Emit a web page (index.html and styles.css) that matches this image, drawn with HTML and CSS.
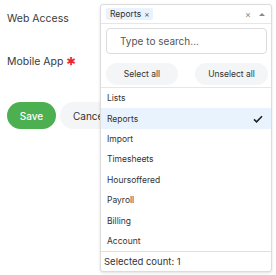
FILE: index.html
```html
<!DOCTYPE html>
<html>
<head>
<meta charset="utf-8">
<link rel="stylesheet" href="styles.css">
</head>
<body>
<div class="page">
  <div class="form">
    <div class="row row-web"><span class="label">Web Access</span></div>
    <div class="row row-mobile"><span class="label">Mobile App</span><span class="req">*</span></div>
    <div class="actions">
      <button class="btn btn-save">Save</button>
      <button class="btn btn-cancel">Cancel</button>
    </div>
  </div>
  <div class="select">
    <div class="control">
      <span class="tag">Reports <span class="tag-x">×</span></span>
      <span class="spacer"></span>
      <span class="clear">×</span>
      <span class="arrow"></span>
    </div>
    <div class="panel">
      <div class="search"><input type="text" placeholder="Type to search..."></div>
      <div class="bulk">
        <button class="pill pill-select">Select all</button>
        <button class="pill pill-unselect">Unselect all</button>
      </div>
      <ul class="options">
        <li>Lists</li>
        <li class="selected">Reports<svg class="check" viewBox="0 0 12 10" width="10" height="8"><path d="M1 5.5 L4.2 8.5 L11 1.5" fill="none" stroke="#222" stroke-width="2"/></svg></li>
        <li>Import</li>
        <li>Timesheets</li>
        <li>Hoursoffered</li>
        <li>Payroll</li>
        <li>Billing</li>
        <li>Account</li>
      </ul>
      <div class="footer">Selected count: 1</div>
    </div>
  </div>
</div>
</body>
</html>
```
FILE: styles.css
```css
* { box-sizing: border-box; }
html, body { margin: 0; padding: 0; background: #fff; }
body { font-family: Inter, "Noto Sans", sans-serif; color: #333; width: 276px; height: 275px; overflow: hidden; }
.page { position: relative; width: 276px; height: 275px; }
.form { padding: 7px 0 0 7px; }
.row { display: flex; align-items: center; height: 22px; }
.row-mobile { margin-top: 21px; }
.label { font-size: 10.5px; color: #3a3a3a; }
.req { color: #e8262b; font-size: 20px; font-weight: 700; margin-left: 2px; line-height: 1; position: relative; top: 4px; }
.actions { display: flex; gap: 4px; margin-top: 30px; }
.btn { border: 0; border-radius: 14px; height: 27px; font-family: inherit; font-size: 10px; padding: 0; }
.btn-save { width: 49px; background: #4caf50; color: #fff; font-weight: 500; }
.btn-cancel { width: 60px; background: #f4f5f7; color: #333; text-align: left; padding-left: 13px; }
.select { position: absolute; left: 100px; top: 4px; width: 172px; height: 268px; border: 1px solid #dcdcdc; border-radius: 3px; background: #fff; box-shadow: 0 1px 3px rgba(0,0,0,0.12); display: flex; flex-direction: column; }
.control { display: flex; align-items: center; height: 19px; flex: none; padding: 0 6px 0 5px; border-bottom: 1px solid #e6e6e6; }
.tag { background: #e9f2fd; color: #333; font-size: 8.5px; padding: 1px 4px; border-radius: 2px; height: 12px; display: flex; align-items: center; }
.tag-x { font-size: 8px; margin-left: 3px; color: #555; }
.spacer { flex: 1; }
.clear { color: #888; font-size: 9px; margin-right: 8px; }
.arrow { width: 0; height: 0; border-left: 3px solid transparent; border-right: 3px solid transparent; border-bottom: 3px solid #888; }
.panel { flex: 1; display: flex; flex-direction: column; }
.search { padding: 4px 4px 0 5px; }
.search input { display: block; width: 100%; height: 26px; border: 1px solid #dcdcdc; border-radius: 4px; font-family: inherit; font-size: 10px; padding: 0 0 0 13px; color: #333; outline: none; }
.search input::placeholder { color: #555; }
.bulk { display: flex; justify-content: space-between; padding: 9px 3px 0 5px; }
.pill { border: 0; background: #f4f5f7; border-radius: 11px; height: 22px; font-family: inherit; font-size: 8.5px; color: #333; padding: 0; }
.pill-select { width: 72px; }
.pill-unselect { width: 73px; }
.options { list-style: none; margin: 2px 0 0; padding: 0; border-top: 1px solid #e6e6e6; }
.options li { height: 20.4px; display: flex; align-items: center; padding: 0 8px 0 6px; font-size: 8.5px; color: #333; }
.options li.selected { background: #e9f3fe; justify-content: space-between; }
.check { display: block; }
.footer { border-top: 1px solid #e0e0e0; font-size: 9.5px; color: #333; padding: 0 0 0 3px; flex: 1; display: flex; align-items: center; }
```
